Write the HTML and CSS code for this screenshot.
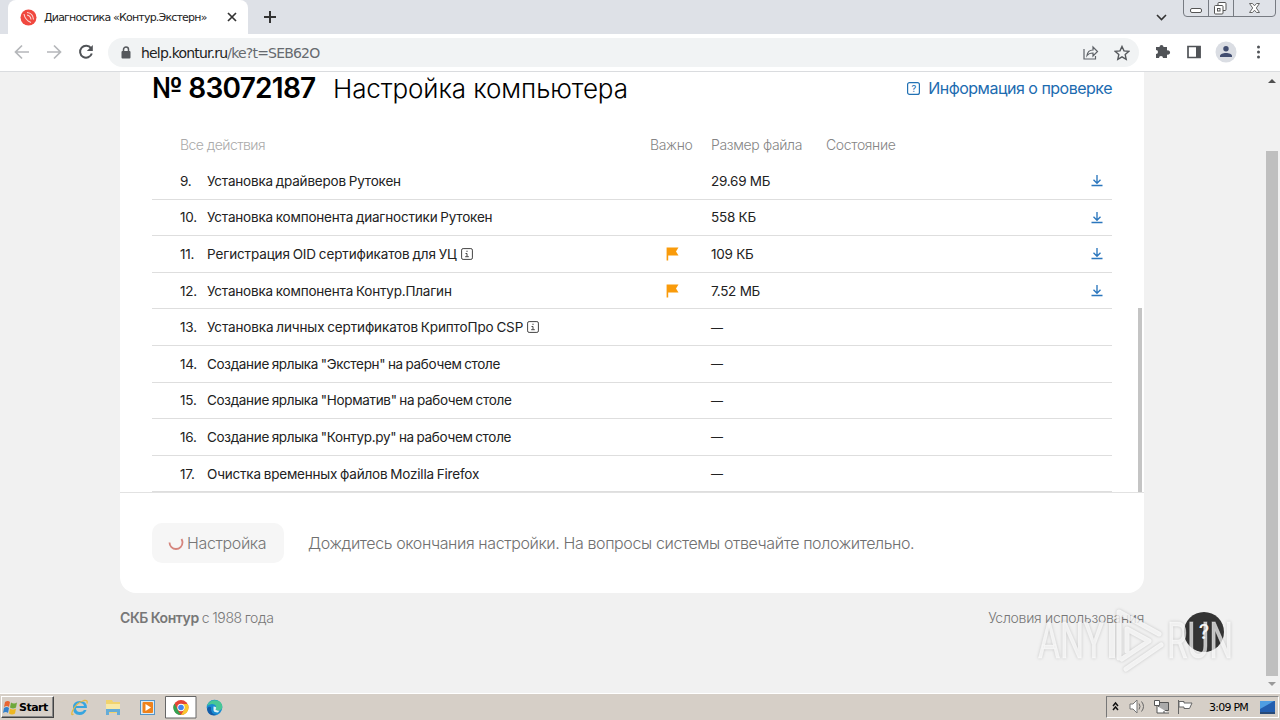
FILE: index.html
```
<!DOCTYPE html>
<html lang="ru">
<head>
<meta charset="utf-8">
<title>Диагностика «Контур.Экстерн»</title>
<link rel="stylesheet" href="styles.css">
</head>
<body>
<svg width="0" height="0" class="defs">
  <symbol id="dl" viewBox="0 0 12 13"><path d="M6 1v8M2.500 5.800 6 9.200 9.500 5.800M.5 11.500h11" fill="none" stroke="#2a76bd" stroke-width="1.350"/></symbol>
  <symbol id="flag" viewBox="0 0 13 14"><path d="M.6.500H12.500L10 4.500l2.500 4H2.200V13.500H.6z" fill="#f99b0b"/></symbol>
  <symbol id="info" viewBox="0 0 12 12"><rect x=".6" y=".6" width="10.800" height="10.800" rx="1.500" fill="none" stroke="#444"/><path d="M6 2.700v1.300M4.500 5.500H6v3M4.200 8.700h3.600" fill="none" stroke="#444"/></symbol>
</svg>
<div class="screen">
  <header class="tabs">
    <div class="tab">
      <svg class="fav" width="17" height="17" viewBox="0 0 17 17"><circle cx="8.500" cy="8.500" r="8" fill="#f0483f"/><path d="M7 3.500q6 .5 6.500 7M7 6q3.500.5 4 4.500M4 5q1 6 7 8.500" fill="none" stroke="#fff" stroke-width="1.100" opacity=".8"/></svg>
      <span class="tab-title">Диагностика «Контур.Экстерн»</span>
      <svg width="10" height="10" viewBox="0 0 10 10"><path d="m1 1 8 8M9 1 1 9" stroke="#333" stroke-width="1.700"/></svg>
    </div>
    <svg class="plus" width="12" height="12" viewBox="0 0 12 12"><path d="M6 0v12M0 6h12" stroke="#333" stroke-width="2"/></svg>
    <svg class="chev" width="11" height="7" viewBox="0 0 11 7"><path d="m1 1 4.500 4.500L10 1" fill="none" stroke="#333" stroke-width="1.600"/></svg>
    <svg class="winctl" width="94" height="18" viewBox="0 0 94 18"><path d="M.5 0v13q0 3.500 3.500 3.500h85q3.500 0 3.500-3.500V0M25.500 0v16.500M50.500 0v16.500" fill="#dfe2e8" stroke="#777b82"/><rect x="7.500" y="8.500" width="11" height="4" rx="1.500" fill="#fff" stroke="#555"/><rect x="35" y="2.500" width="8" height="8" rx="1" fill="#fff" stroke="#555"/><rect x="31.500" y="5.500" width="8.500" height="8.500" rx="1" fill="#fff" stroke="#555"/><rect x="34.500" y="8.500" width="2.500" height="2.500" fill="none" stroke="#555"/><path d="M66.500 3.500h3l2 2.300 2-2.300h3L73.300 8l3.200 4.500h-3l-2-2.300-2 2.300h-3L69.700 8z" fill="#fff" stroke="#666"/></svg>
  </header>
  <div class="toolbar">
    <svg width="100" height="32" viewBox="0 0 100 32" fill="none" stroke="#b5b7ba" stroke-width="1.700"><path d="M29 16H16M22 9.500 15.500 16l6.500 6.500M47 16h13M54 9.500l6.500 6.500-6.500 6.500"/><path d="M91 12.200A6 6 0 1 0 91.800 17.500" stroke="#505357" stroke-width="2"/><path d="M92.800 9v6h-6z" fill="#505357" stroke="none"/></svg>
    <div class="omni">
      <svg class="lock" width="10" height="13" viewBox="0 0 10 13"><path d="M2.500 6V3.500a2.500 2.500 0 0 1 5 0V6" fill="none" stroke="#55585c" stroke-width="1.500"/><rect x=".5" y="5" width="9" height="7.500" rx="1" fill="#55585c"/></svg>
      <span class="url">help.kontur.ru<i>/ke?t=SEB62O</i></span>
      <svg class="share" width="16" height="15" viewBox="0 0 16 15" fill="none" stroke="#5f6368" stroke-width="1.200"><path d="M1 4v10h11.500v-3M4 10.500C4.500 6.500 7 5 10 5V2l4.500 4.500L10 11V8c-3 0-4.500.5-6 2.500z"/></svg>
      <svg width="16" height="16" viewBox="0 0 16 16"><path d="m8 1.500 2 4.400 4.700.5-3.500 3.200 1 4.700L8 11.900l-4.200 2.400 1-4.700L1.300 6.400 6 5.900z" fill="none" stroke="#55585c" stroke-width="1.400"/></svg>
    </div>
    <svg class="acts" width="134" height="32" viewBox="0 0 134 32"><path d="M10 11h3.500a2 2 0 1 1 4 0H21v3.500a2.200 2.200 0 1 1 0 4V22h-4a2 2 0 1 0-4 0h-3v-4a2 2 0 1 0 0-4z" fill="#505357"/><path d="M42 10.500h12v11H42z" fill="none" stroke="#505357" stroke-width="1.700"/><path d="M50 10h4.500v12H50z" fill="#505357"/><circle cx="80" cy="16" r="10.500" fill="#dadde3"/><circle cx="80" cy="12.700" r="2.700" fill="#414d70"/><path d="M74 21v-1c0-4 12-4 12 0v1z" fill="#414d70"/><g fill="#505357"><circle cx="112.500" cy="11" r="1.500"/><circle cx="112.500" cy="16" r="1.500"/><circle cx="112.500" cy="21" r="1.500"/></g></svg>
  </div>
  <main class="view">
    <div class="page">
      <section class="card">
        <div class="inner">
          <div class="head"><b>№ 83072187</b><h1>Настройка компьютера</h1>
            <a class="link"><svg width="13" height="13" viewBox="0 0 13 13"><rect x=".6" y=".6" width="11.800" height="11.800" rx="2" fill="none" stroke="#2271b3" stroke-width="1.200"/><text x="6.500" y="10" text-anchor="middle" font-size="9" font-weight="500" fill="#2271b3">?</text></svg><span>Информация о проверке</span></a></div>
          <div class="cols"><span class="all">Все действия</span><span>Важно</span><span>Размер файла</span><span>Состояние</span></div>
          <div class="row"><span class="n">9.</span><span class="t">Установка драйверов Рутокен</span><span></span><span class="s">29.69 МБ</span><svg class="d"><use href="#dl"/></svg></div>
          <div class="row"><span class="n">10.</span><span class="t">Установка компонента диагностики Рутокен</span><span></span><span class="s">558 КБ</span><svg class="d"><use href="#dl"/></svg></div>
          <div class="row"><span class="n">11.</span><span class="t wide">Регистрация OID сертификатов для УЦ<svg class="i"><use href="#info"/></svg></span><svg class="f"><use href="#flag"/></svg><span class="s">109 КБ</span><svg class="d"><use href="#dl"/></svg></div>
          <div class="row"><span class="n">12.</span><span class="t">Установка компонента Контур.Плагин</span><svg class="f"><use href="#flag"/></svg><span class="s">7.52 МБ</span><svg class="d"><use href="#dl"/></svg></div>
          <div class="row"><span class="n">13.</span><span class="t wide">Установка личных сертификатов КриптоПро CSP<svg class="i"><use href="#info"/></svg></span><span></span><span class="s dash">—</span></div>
          <div class="row"><span class="n">14.</span><span class="t tight">Создание ярлыка "Экстерн" на рабочем столе</span><span></span><span class="s dash">—</span></div>
          <div class="row"><span class="n">15.</span><span class="t tight">Создание ярлыка "Норматив" на рабочем столе</span><span></span><span class="s dash">—</span></div>
          <div class="row"><span class="n">16.</span><span class="t tight">Создание ярлыка "Контур.ру" на рабочем столе</span><span></span><span class="s dash">—</span></div>
          <div class="row"><span class="n">17.</span><span class="t">Очистка временных файлов Mozilla Firefox</span><span></span><span class="s dash">—</span></div>
        </div>
        <div class="foot">
          <div class="btn"><svg width="16" height="16" viewBox="0 0 16 16"><path d="M1.500 7.500a6.500 6.500 0 0 0 13 0q0-1.500-1-3.500" fill="none" stroke="#d5857d" stroke-width="1.800"/></svg><span>Настройка</span></div>
          <span class="wait">Дождитесь окончания настройки. На вопросы системы отвечайте положительно.</span>
        </div>
        <div class="thumb"></div>
      </section>
      <footer><span class="corp"><b>СКБ Контур</b> с 1988 года</span><span class="terms">Условия использования</span></footer>
    </div>
    <div class="bar"><svg width="8" height="4" viewBox="0 0 8 4"><path d="M0 4 4 0l4 4z" fill="#505050"/></svg><div class="barthumb"></div><svg width="8" height="4" viewBox="0 0 8 4"><path d="m0 0 4 4 4-4z" fill="#999"/></svg></div>
    <div class="help">?</div>
    <svg class="mark" width="204" height="66" viewBox="0 0 204 66"><g fill="#fff" fill-opacity=".7"><g font-family="Roboto, sans-serif" font-size="50" stroke="#fff" stroke-opacity=".4"><text x="2" y="52" textLength="66" lengthAdjust="spacingAndGlyphs">ANY</text><text x="131" y="52" textLength="66" lengthAdjust="spacingAndGlyphs">RUN</text></g><path d="M73 17h6v35h-6z"/></g><g fill="none" stroke="#fff" stroke-opacity=".75" stroke-width="5" stroke-linejoin="round" stroke-linecap="round"><path d="M83 52V6l40 22M91 45V23l22 12-27 18M90 63l35-24"/></g></svg>
  </main>
  <div class="task">
    <div class="start"><svg width="16" height="15" viewBox="0 0 16 15"><path d="M3 2q3-2 5 0L7 7Q5 5 2 7z" fill="#e96532"/><path d="M9 2.500q3 2 6 0l-1 5q-3 2-6 0z" fill="#6da83b"/><path d="M2 8q3-2 5 0l-1 5q-2-2-5 0z" fill="#3380cb"/><path d="M8 8.500q3 2 6 0l-1 5q-3 2-6 0z" fill="#edb722"/></svg>Start</div>
    <svg class="apps" width="180" height="25" viewBox="0 0 180 25">
      <path d="M33 14H22q0 4 4 4 3 0 4-2h2.500q-2 5-7 5-6.500 0-6.500-7.500 0-6.500 7-6.500 7 0 7 7zM22 12h8q-.5-3-4-3-3.500 0-4 3z" fill="#37a5df"/><path d="M19.500 20q-3 2-1-3Q22 9 30 6.500q4-1 3 3" fill="none" stroke="#e5ba43" stroke-width="1.300"/>
      <path d="M52 6h6l1 2h7v11H52z" fill="#f1d36d"/><path d="M52 10h14v5H52z" fill="#f8e9a6"/><path d="M52 21v-6h14v6h-3v-3h-8v3z" fill="#65acd7"/>
      <rect x="86.500" y="6.500" width="14" height="14" fill="#dbeaf4" stroke="#5495c9"/><rect x="88.500" y="8" width="10.500" height="11" rx="1" fill="#ee821c"/><path d="m91.500 10 5.500 3.500-5.500 3.500z" fill="#fff"/>
      <path d="M111.500 24V2.500H142V24z" fill="#fff" stroke="#666"/><circle cx="127" cy="13.500" r="7.500" fill="#e54435"/><path d="m120.500 9.500 4 8 2.500 3.500A7.500 7.500 0 0 1 120.500 9.500z" fill="#33a352"/><path d="M127 10h6.700A7.500 7.500 0 0 1 127 21l3.500-6z" fill="#f9c72e"/><circle cx="127" cy="13.500" r="3.700" fill="#fff"/><circle cx="127" cy="13.500" r="2.800" fill="#4284ef"/>
      <circle cx="160.500" cy="13.500" r="7.800" fill="#188bd2"/><path d="M153 12q2-6 8-5.800 7 .3 7.300 6.300 0 4-4 4-3 0-3-1.500 2-3-1-4.500-3-1.500-7.300 1.500z" fill="#48c795"/><path d="M157 13q-1 7 6 8-9 2-10-6 1-3 4-2z" fill="#145ca7"/><path d="M159.500 12.500q4 0 2 3 1 1.500 4 1l-1.500 2q-5 0-4.500-3z" fill="#dff4f8"/>
    </svg>
    <div class="tray"><svg width="86" height="20" viewBox="0 0 86 20"><path d="m6 9 2.500-3L11 9M6 13l2.500-3 2.500 3" fill="none" stroke="#111" stroke-width="1.500"/><path d="M23 7h3l4-4v13l-4-4h-3z" fill="#fff" stroke="#777"/><path d="M32 6.500q2 3 0 6M34.500 4.500q4 5 0 10" fill="none" stroke="#666"/><path d="M51.500 5.500h10v8h-10z" fill="#aaa" stroke="#555"/><path d="M47.500 3.500h5v5h-5zM50 9v7h12M57 14v2" fill="#fff" stroke="#555"/><path d="M71.500 3v14M72 4.500h5v1.500h8l-2.500 5.500H77V10h-5z" fill="#fff" stroke="#666"/></svg><span>3:09 PM</span><svg width="15" height="13" viewBox="0 0 15 13"><path d="M0 0h15v11H0z" fill="#235eaf"/><path d="M0 0h14L0 8z" fill="#4e9de2"/><path d="M0 11h15v2H0z" fill="#284a78"/></svg></div>
  </div>
</div>
</body>
</html>
```
FILE: styles.css
```
* { box-sizing: border-box; }
body { margin: 0; font-family: Inter, "Noto Sans", sans-serif; color: #222; }
.defs { position: absolute; }
svg { display: block; flex: none; }
.screen { width: 1280px; height: 720px; display: flex; flex-direction: column; overflow: hidden; background: #fff; }
span { white-space: nowrap; }
.tabs { height: 34px; background: #dee1e7; display: flex; align-items: flex-start; padding-left: 8px; flex: none; }
.tab { width: 240px; height: 34px; background: #fff; border-radius: 8px 8px 0 0; display: flex; align-items: center; padding-left: 12px; }
.tab-title { width: 166px; margin: 0 17px 0 7px; font: 11px "DejaVu Sans", sans-serif; letter-spacing: -.8px; }
.plus { margin: 11px 0 0 16px; }
.chev { margin: 14px 16px 0 auto; }
.winctl { margin-right: 3px; }
.toolbar { height: 38px; padding-top: 2px; display: flex; border-bottom: 1px solid #dadcdf; flex: none; }
.omni { width: 1031px; height: 29px; margin: 2px 0 0 8px; border-radius: 15px; background: #f1f3f4; display: flex; align-items: center; padding: 0 0 0 13px; }
.url { font: 14px "DejaVu Sans", sans-serif; margin-left: 10px; letter-spacing: -.81px; }
.url i { font-style: normal; color: #666a6f; }
.share { margin: 0 15px 0 auto; }
.omni > svg:last-child { margin-right: 9px; }
.acts { margin-left: 7px; }
.view { position: relative; height: 621px; display: flex; background: #f1f1f1; overflow: hidden; flex: none; }
.page { width: 1264px; padding-left: 120px; }
.card { width: 1024px; height: 521px; background: #fff; border-radius: 0 0 16px 16px; position: relative; }
.inner { padding: 0 32px; height: 420px; }
.head { height: 32px; display: flex; align-items: center; font-size: 26px; color: #000; }
.head b { width: 181px; font-size: 28px; font-weight: 600; letter-spacing: -.75px; white-space: nowrap; }
.head h1 { font-size: 26px; font-weight: 300; margin: 0; letter-spacing: -.1px; white-space: nowrap; }
.link { margin-left: auto; display: flex; align-items: center; gap: 8px; font-size: 16px; letter-spacing: -.5px; color: #1c6bb0; }
.cols { height: 59px; padding: 21px 0 0 28px; display: grid; grid-template-columns: 470px 61px 115px 1fr; align-items: center; font-size: 14px; letter-spacing: -.35px; color: #858585; font-weight: 300; }
.cols .all { color: #aaa; letter-spacing: -.55px; }
.row { height: 36.600px; padding-left: 28px; border-bottom: 1px solid #dedede; display: grid; grid-template-columns: 27px 458px 46px 380px 12px; align-items: center; font-size: 13.500px; }
.n { letter-spacing: -.2px; }
.s { letter-spacing: -.25px; }
.t { display: flex; align-items: center; gap: 4px; letter-spacing: -.19px; word-spacing: -.8px; }
.tight { letter-spacing: -.32px; }
.wide { letter-spacing: -.13px; }
.i { width: 12px; height: 12px; }
.f { width: 13px; height: 14px; margin-left: 1px; }
.d { width: 12px; height: 13px; }
.dash { font-size: 12px; }
.foot { border-top: 1px solid #e2e2e2; height: 101px; padding: 30px 32px; display: flex; gap: 24px; }
.btn { width: 132px; height: 40px; border-radius: 10px; background: #f6f6f6; display: flex; align-items: center; padding-left: 16px; gap: 3px; font-size: 16px; font-weight: 300; letter-spacing: -.35px; color: #777; }
.wait { line-height: 40px; font-size: 16px; font-weight: 300; letter-spacing: -.39px; color: #707070; }
.thumb { position: absolute; right: 2px; top: 236px; width: 4px; height: 184px; background: #c4c4c4; }
footer { width: 1024px; padding-top: 16px; display: flex; justify-content: space-between; font-size: 14px; line-height: 18px; color: #777; font-weight: 300; }
footer b { font-weight: 600; }
.corp { letter-spacing: -.4px; word-spacing: -.5px; }
.terms { letter-spacing: -.28px; }
.bar { width: 16px; height: 620px; display: flex; flex-direction: column; align-items: center; padding-top: 7px; }
.barthumb { width: 12px; height: 525px; margin: 68px 0 6px; background: #bfbfbf; }
.help { position: absolute; left: 1184px; top: 540px; width: 40px; height: 40px; border-radius: 50%; background: #343434; color: #fff; font-size: 20px; font-weight: 500; line-height: 40px; text-align: center; }
.mark { position: absolute; left: 1036px; top: 534px; overflow: visible; filter: drop-shadow(0 0 1.500px rgba(0,0,0,.25)); }
.task { height: 27px; background: #d6cfc7; border-top: 1px solid #fff; display: flex; flex: none; }
.start { width: 53px; height: 22px; margin: 2px 0 0 1px; border: 1px solid; border-color: #fff #444 #444 #fff; box-shadow: inset -1px -1px #888; display: flex; align-items: center; font: bold 11px "DejaVu Sans", sans-serif; letter-spacing: -.5px; color: #000; gap: 1px; }
.tray { width: 173px; height: 22px; margin: 2px 1px 0 auto; border: 1px solid; border-color: #888 #fff #fff #777; display: flex; align-items: center; font: 11px "DejaVu Sans", sans-serif; letter-spacing: -.75px; color: #000; }
.tray span { width: 51px; margin-left: 16px; }
```
